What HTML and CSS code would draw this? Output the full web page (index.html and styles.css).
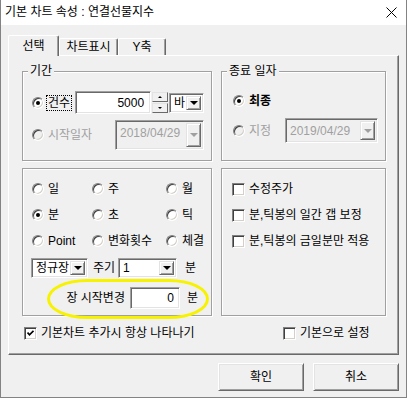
FILE: index.html
```html
<!doctype html>
<html lang="ko">
    <head>
        <meta charset="UTF-8" />
        <title>기본 차트 속성</title>
        <link rel="stylesheet" href="styles.css">
    </head>
    <body>
        <div class="window">
            <div class="titlebar">
                <span>기본 차트 속성 : 연결선물지수</span>
                <svg class="close" width="11" height="11" viewBox="0 0 11 11"><path d="M0.5 0.5L10.5 10.5M10.5 0.5L0.5 10.5" stroke="#000" stroke-width="1" fill="none"/></svg>
            </div>
            <div class="content">
                <div class="tabs">
                    <div class="tab active">선택</div>
                    <div class="tab tab-chart">차트표시</div>
                    <div class="tab tab-y">Y축</div>
                </div>
                <div class="panel">
                    <div class="panel-row">
                        <fieldset class="group left period">
                            <legend>기간</legend>
                            <div class="line count">
                                <span class="radio on"></span>
                                <span class="focus">건수</span>
                                <span class="field num">5000</span>
                                <span class="spin"><span class="up"></span><span class="down"></span></span>
                                <span class="field combo unit"><span class="val">바</span><span class="drop"></span></span>
                            </div>
                            <div class="line start">
                                <span class="radio off"></span>
                                <span class="lbl dim">시작일자</span>
                                <span class="field combo date off"><span class="val">2018/04/29</span><span class="drop"></span></span>
                            </div>
                        </fieldset>
                        <fieldset class="group right end">
                            <legend>종료 일자</legend>
                            <div class="line final">
                                <span class="radio on"></span>
                                <span class="lbl strong">최종</span>
                            </div>
                            <div class="line pick">
                                <span class="radio off"></span>
                                <span class="lbl dim">지정</span>
                                <span class="field combo date2 off"><span class="val">2019/04/29</span><span class="drop"></span></span>
                            </div>
                        </fieldset>
                    </div>
                    <div class="panel-row mid">
                        <div class="group left period-type">
                            <div class="options">
                                <div class="opt"><span class="radio"></span><span>일</span></div>
                                <div class="opt"><span class="radio"></span><span>주</span></div>
                                <div class="opt"><span class="radio"></span><span>월</span></div>
                                <div class="opt"><span class="radio on"></span><span>분</span></div>
                                <div class="opt"><span class="radio"></span><span>초</span></div>
                                <div class="opt"><span class="radio"></span><span>틱</span></div>
                                <div class="opt"><span class="radio"></span><span>Point</span></div>
                                <div class="opt"><span class="radio"></span><span>변화횟수</span></div>
                                <div class="opt"><span class="radio"></span><span>체결</span></div>
                            </div>
                            <div class="cycle">
                                <span class="field combo session"><span class="val">정규장</span><span class="drop"></span></span>
                                <span class="cycle-lbl">주기</span>
                                <span class="field combo period-num"><span class="val">1</span><span class="drop"></span></span>
                                <span class="unit-lbl">분</span>
                            </div>
                            <div class="shift">
                                <span>장 시작변경</span>
                                <span class="field shift-num">0</span>
                                <span>분</span>
                            </div>
                            <div class="mark"></div>
                        </div>
                        <div class="group right adjust">
                            <div class="checks">
                                <div class="chk-line"><span class="check"></span><span>수정주가</span></div>
                                <div class="chk-line"><span class="check"></span><span>분,틱봉의 일간 갭 보정</span></div>
                                <div class="chk-line"><span class="check"></span><span>분,틱봉의 금일분만 적용</span></div>
                            </div>
                        </div>
                    </div>
                    <div class="foot">
                        <div class="chk-line">
                            <span class="check on"><svg width="7" height="7" viewBox="0 0 7 7"><path d="M0.5 2.5L2.5 4.8L6.5 0.8" stroke="#000" stroke-width="1.7" fill="none"/></svg></span>
                            <span>기본차트 추가시 항상 나타나기</span>
                        </div>
                        <div class="chk-line">
                            <span class="check"></span>
                            <span>기본으로 설정</span>
                        </div>
                    </div>
                </div>
                <div class="actions">
                    <button class="btn">확인</button>
                    <button class="btn">취소</button>
                </div>
            </div>
        </div>
    </body>
</html>
```

FILE: styles.css
```css
* {
    box-sizing: border-box;
}
body {
    margin: 0;
    background: #f0f0f0;
    color: #000;
    font-family: "Liberation Sans", "Noto Sans CJK KR", sans-serif;
    font-size: 12px;
    line-height: 14px;
}
.window {
    width: 407px;
    height: 398px;
    border: 1px solid #838383;
    border-top: none;
    background: #f0f0f0;
    overflow: hidden;
}
.titlebar {
    height: 25px;
    background: #fff;
    display: flex;
    align-items: center;
    justify-content: space-between;
    padding: 0 9px 1px 4px;
}
.content {
    padding: 10px 7px 0;
}

/* tabs */
.tabs {
    display: flex;
    align-items: flex-end;
    height: 20px;
    position: relative;
    z-index: 1;
}
.tab {
    height: 17px;
    display: flex;
    align-items: center;
    justify-content: center;
    background: #f0f0f0;
    border: 1px solid #fff;
    border-right-color: #696969;
    border-bottom: none;
    border-radius: 2px 2px 0 0;
    box-shadow: inset -1px 0 0 #a0a0a0;
}
.tab.active {
    width: 51px;
    height: 21px;
    margin-bottom: -1px;
}
.tab-chart {
    width: 59px;
}
.tab-y {
    width: 48px;
}
.panel {
    height: 300px;
    border: 1px solid #fff;
    border-right-color: #696969;
    border-bottom-color: #696969;
    box-shadow: inset -1px -1px 0 #a0a0a0;
    padding: 8px 0 0 13px;
}
.panel-row {
    display: flex;
    gap: 9px;
}
.panel-row.mid {
    margin-top: 7px;
}

/* group boxes */
.group {
    margin: 0;
    padding: 0;
    min-width: 0;
    border: 1px solid #a0a0a0;
    box-shadow: inset 1px 1px 0 #fff, 1px 1px 0 #fff;
    position: relative;
}
.group legend {
    margin-left: 5px;
    padding: 0 2px;
    background: #f0f0f0;
}
.group.left {
    width: 190px;
}
.group.right {
    width: 165px;
}
.period, .end {
    height: 97px;
}
.period-type, .adjust {
    height: 148px;
}
.line {
    display: flex;
    align-items: center;
}
.period .count {
    height: 23px;
    margin: 13px 0 0 9px;
}
.period .start {
    height: 30px;
    margin: 6px 7px 0 9px;
}
.end .final {
    height: 23px;
    margin: 11px 0 0 11px;
}
.end .pick {
    height: 25px;
    margin: 6px 7px 0 11px;
}
.lbl {
    margin-left: 4px;
}
.dim {
    color: #a0a0a0;
}
.strong {
    font-weight: bold;
}
.focus {
    margin-left: 2px;
    padding: 0 1px;
    border: 1px dotted #000;
}

/* controls */
.radio {
    flex: none;
    width: 12px;
    height: 12px;
    border-radius: 50%;
    background: #fff;
    border: 1px solid;
    border-color: #808080 #fff #fff #808080;
    box-shadow: inset 1px 1px 0 #404040, inset -1px -1px 0 #d4d0c8;
    position: relative;
}
.radio.off {
    background: #f0f0f0;
}
.radio.on::after {
    content: "";
    position: absolute;
    left: 3px;
    top: 3px;
    width: 4px;
    height: 4px;
    border-radius: 50%;
    background: #000;
}
.check {
    flex: none;
    width: 13px;
    height: 13px;
    background: #fff;
    border: 1px solid;
    border-color: #808080 #fff #fff #808080;
    box-shadow: inset 1px 1px 0 #404040, inset -1px -1px 0 #d4d0c8;
    display: flex;
    align-items: center;
    justify-content: center;
}
.field {
    background: #fff;
    border: 1px solid;
    border-color: #a0a0a0 #fff #fff #a0a0a0;
    box-shadow: inset 1px 1px 0 #696969, inset -1px -1px 0 #e3e3e3;
}
.field.off {
    background: #f0f0f0;
    color: #a0a0a0;
}
.combo {
    display: flex;
    align-items: center;
    padding: 2px;
}
.combo .val {
    flex: 1;
    padding-left: 2px;
    white-space: nowrap;
}
.drop {
    flex: none;
    align-self: stretch;
    width: 15px;
    background: #f0f0f0;
    border: 1px solid;
    border-color: #e3e3e3 #696969 #696969 #e3e3e3;
    box-shadow: inset 1px 1px 0 #fff, inset -1px -1px 0 #a0a0a0;
    display: flex;
    align-items: center;
    justify-content: center;
}
.drop::before {
    content: "";
    border-left: 4px solid transparent;
    border-right: 4px solid transparent;
    border-top: 4px solid #000;
}
.off .drop::before {
    border-top-color: #a0a0a0;
}
.num {
    width: 76px;
    height: 23px;
    margin-left: 3px;
    padding-right: 6px;
    display: flex;
    align-items: center;
    justify-content: flex-end;
}
.spin {
    width: 16px;
    height: 21px;
    margin-left: 1px;
    display: flex;
    flex-direction: column;
    gap: 1px;
}
.spin span {
    flex: 1;
    background: #f0f0f0;
    border: 1px solid;
    border-color: #e3e3e3 #696969 #696969 #e3e3e3;
    display: flex;
    align-items: center;
    justify-content: center;
}
.spin .up::before {
    content: "";
    border-left: 2px solid transparent;
    border-right: 2px solid transparent;
    border-bottom: 2px solid #000;
}
.spin .down::before {
    content: "";
    border-left: 2px solid transparent;
    border-right: 2px solid transparent;
    border-top: 2px solid #000;
}
.unit {
    width: 35px;
    height: 20px;
    margin-left: 1px;
}
.date {
    width: 89px;
    height: 30px;
    margin-left: auto;
    align-items: stretch;
}
.date .val {
    padding-top: 3px;
}
.date2 {
    width: 93px;
    height: 25px;
    margin-left: auto;
}

/* period type */
.options {
    display: grid;
    grid-template-columns: 60px 74px auto;
    grid-auto-rows: 16px;
    row-gap: 10px;
    margin: 12px 0 0 9px;
}
.opt {
    display: flex;
    align-items: center;
    gap: 4px;
}
.cycle {
    display: flex;
    align-items: center;
    height: 20px;
    margin: 9px 0 0 8px;
}
.session {
    width: 57px;
    height: 20px;
}
.cycle-lbl {
    margin-left: 5px;
}
.period-num {
    width: 59px;
    height: 20px;
    margin-left: 3px;
}
.unit-lbl {
    margin-left: 8px;
}
.shift {
    display: flex;
    align-items: center;
    justify-content: flex-end;
    height: 22px;
    margin-top: 9px;
    padding-right: 13px;
}
.shift-num {
    width: 50px;
    height: 22px;
    margin: 0 7px 0 5px;
    padding-right: 5px;
    display: flex;
    align-items: center;
    justify-content: flex-end;
}
.mark {
    position: absolute;
    left: 24px;
    top: 110px;
    width: 162px;
    height: 40px;
    border: 3px solid #f7f200;
    border-radius: 40px / 20px;
}

/* checks */
.checks {
    display: flex;
    flex-direction: column;
    gap: 10px;
    margin: 12px 0 0 10px;
}
.chk-line {
    display: flex;
    align-items: center;
    gap: 4px;
    height: 16px;
    white-space: nowrap;
}
.foot {
    display: grid;
    grid-template-columns: 259px auto;
    height: 16px;
    margin-top: 9px;
    padding-left: 2px;
}

/* buttons */
.actions {
    display: flex;
    justify-content: flex-end;
    gap: 9px;
    margin-top: 8px;
}
.btn {
    width: 86px;
    height: 28px;
    padding: 0;
    font: inherit;
    color: #000;
    background: #f0f0f0;
    border: 1px solid;
    border-color: #fff #696969 #696969 #fff;
    box-shadow: inset 1px 1px 0 #e3e3e3, inset -1px -1px 0 #a0a0a0;
}
```
